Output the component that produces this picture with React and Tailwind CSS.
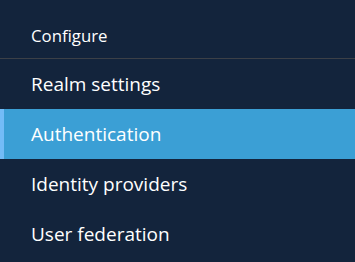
import React from "react";

const items = [
  { label: "Realm settings" },
  { label: "Authentication", active: true },
  { label: "Identity providers" },
  { label: "User federation" },
];

export default function App() {
  return (
    <div
      className="w-[355px] h-[262px] overflow-hidden bg-[#13243c] text-white"
      style={{ fontFamily: '"Open Sans", "Noto Sans", sans-serif' }}
    >
      <div className="h-[59px] flex items-center pl-[31px] pt-[13px] text-[16.8px] border-b border-[#3c4047]">
        Configure
      </div>
      <nav className="flex flex-col">
        {items.map((item) => (
          <div
            key={item.label}
            className={
              "relative h-[50px] flex items-center pl-[31px] text-[19px] " +
              (item.active ? "bg-[#3b9fd5]" : "")
            }
          >
            {item.active && (
              <span className="absolute left-0 top-0 bottom-0 w-[4px] bg-[#73bcf7]" />
            )}
            {item.label}
          </div>
        ))}
      </nav>
    </div>
  );
}
